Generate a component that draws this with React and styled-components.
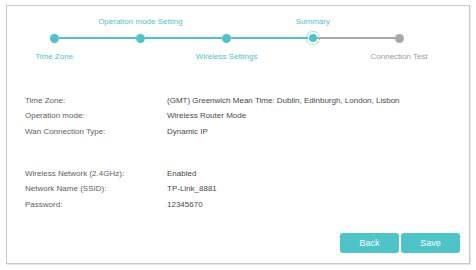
import React from "react";
import styled, { createGlobalStyle } from "styled-components";

const TEAL = "#4ec3c8";
const GREY = "#a8a8ab";

const steps = [
  { label: "Time Zone", pos: "bottom", state: "done" },
  { label: "Operation mode Setting", pos: "top", state: "done" },
  { label: "Wireless Settings", pos: "bottom", state: "done" },
  { label: "Summary", pos: "top", state: "current" },
  { label: "Connection Test", pos: "bottom", state: "todo" },
];

const groups = [
  [
    ["Time Zone:", "(GMT) Greenwich Mean Time: Dublin, Edinburgh, London, Lisbon"],
    ["Operation mode:", "Wireless Router Mode"],
    ["Wan Connection Type:", "Dynamic IP"],
  ],
  [
    ["Wireless Network (2.4GHz):", "Enabled"],
    ["Network Name (SSID):", "TP-Link_8881"],
    ["Password:", "12345670"],
  ],
];

const App = () => {
  return (
    <Page>
      <GlobalStyle />
      <Panel>
        <Stepper>
          {steps.map((s, i) => {
            const leftColor = steps[i - 1] && s.state !== "todo" ? TEAL : GREY;
            const rightColor = s.state === "done" ? TEAL : GREY;
            return (
              <Step key={s.label}>
                <StepLabel $state={s.state}>{s.pos === "top" ? s.label : ""}</StepLabel>
                <Track>
                  <Half $color={leftColor} $hidden={i === 0} />
                  {s.state === "current" ? (
                    <Ring>
                      <Dot $color={TEAL} />
                    </Ring>
                  ) : (
                    <Dot $color={s.state === "todo" ? GREY : TEAL} />
                  )}
                  <Half $color={rightColor} $hidden={i === steps.length - 1} />
                </Track>
                <StepLabel $state={s.state} $bottom>
                  {s.pos === "bottom" ? s.label : ""}
                </StepLabel>
              </Step>
            );
          })}
        </Stepper>
        <Summary>
          {groups.map((rows, g) => (
            <Group key={g}>
              {rows.map(([k, v]) => (
                <Row key={k}>
                  <Key>{k}</Key>
                  <Value>{v}</Value>
                </Row>
              ))}
            </Group>
          ))}
        </Summary>
        <Actions>
          <Button>Back</Button>
          <Button>Save</Button>
        </Actions>
      </Panel>
    </Page>
  );
};

const GlobalStyle = createGlobalStyle`
  html, body {
    margin: 0;
    padding: 0;
    background: #ffffff;
  }
  body {
    font-family: "Liberation Sans", Arial, sans-serif;
  }
`;
const Page = styled.div`
  padding: 5px 6px;
  width: 476px;
  height: 270px;
  box-sizing: border-box;
`;
const Panel = styled.div`
  width: 464px;
  height: 259px;
  box-sizing: border-box;
  border: 1px solid #c9c9c9;
  box-shadow: 1px 1px 0 #e6e6e6;
  display: flex;
  flex-direction: column;
  background: #fff;
`;
const Stepper = styled.div`
  display: flex;
  padding: 10px 0 0 4px;
`;
const Step = styled.div`
  width: 86.25px;
  display: flex;
  flex-direction: column;
  align-items: stretch;
`;
const StepLabel = styled.div`
  height: 11px;
  line-height: 11px;
  font-size: 8px;
  text-align: center;
  white-space: nowrap;
  color: ${(p) => (p.$state === "todo" ? "#9a9a9c" : TEAL)};
  margin-top: ${(p) => (p.$bottom ? "7px" : "0")};
  margin-bottom: ${(p) => (p.$bottom ? "0" : "5px")};
`;
const Track = styled.div`
  height: 12px;
  display: flex;
  align-items: center;
`;
const Half = styled.div`
  flex: 1;
  height: 2px;
  background: ${(p) => p.$color};
  visibility: ${(p) => (p.$hidden ? "hidden" : "visible")};
`;
const Dot = styled.span`
  width: 9px;
  height: 9px;
  border-radius: 50%;
  background: ${(p) => p.$color};
  flex-shrink: 0;
`;
const Ring = styled.span`
  width: 14px;
  height: 14px;
  box-sizing: border-box;
  border: 1.5px dotted ${TEAL};
  border-radius: 50%;
  display: flex;
  align-items: center;
  justify-content: center;
  flex-shrink: 0;
  margin: 0 -2.5px;
  ${Dot} {
    width: 8px;
    height: 8px;
  }
`;
const Summary = styled.div`
  display: flex;
  flex-direction: column;
  gap: 27px;
  padding: 31px 0 0 18px;
`;
const Group = styled.div`
  display: flex;
  flex-direction: column;
`;
const Row = styled.div`
  display: flex;
  height: 15.3px;
  align-items: center;
  font-size: 8px;
`;
const Key = styled.span`
  width: 142px;
  color: #5e5e5e;
`;
const Value = styled.span`
  color: #484848;
`;
const Actions = styled.div`
  margin-top: auto;
  display: flex;
  justify-content: flex-end;
  gap: 2px;
  padding: 0 9px 10px 0;
`;
const Button = styled.button`
  width: 59px;
  height: 20px;
  border: none;
  border-radius: 3px;
  background: ${TEAL};
  color: #fff;
  font-family: "Liberation Sans", Arial, sans-serif;
  font-size: 9px;
  padding: 0;
  cursor: pointer;
`;

export default App;
